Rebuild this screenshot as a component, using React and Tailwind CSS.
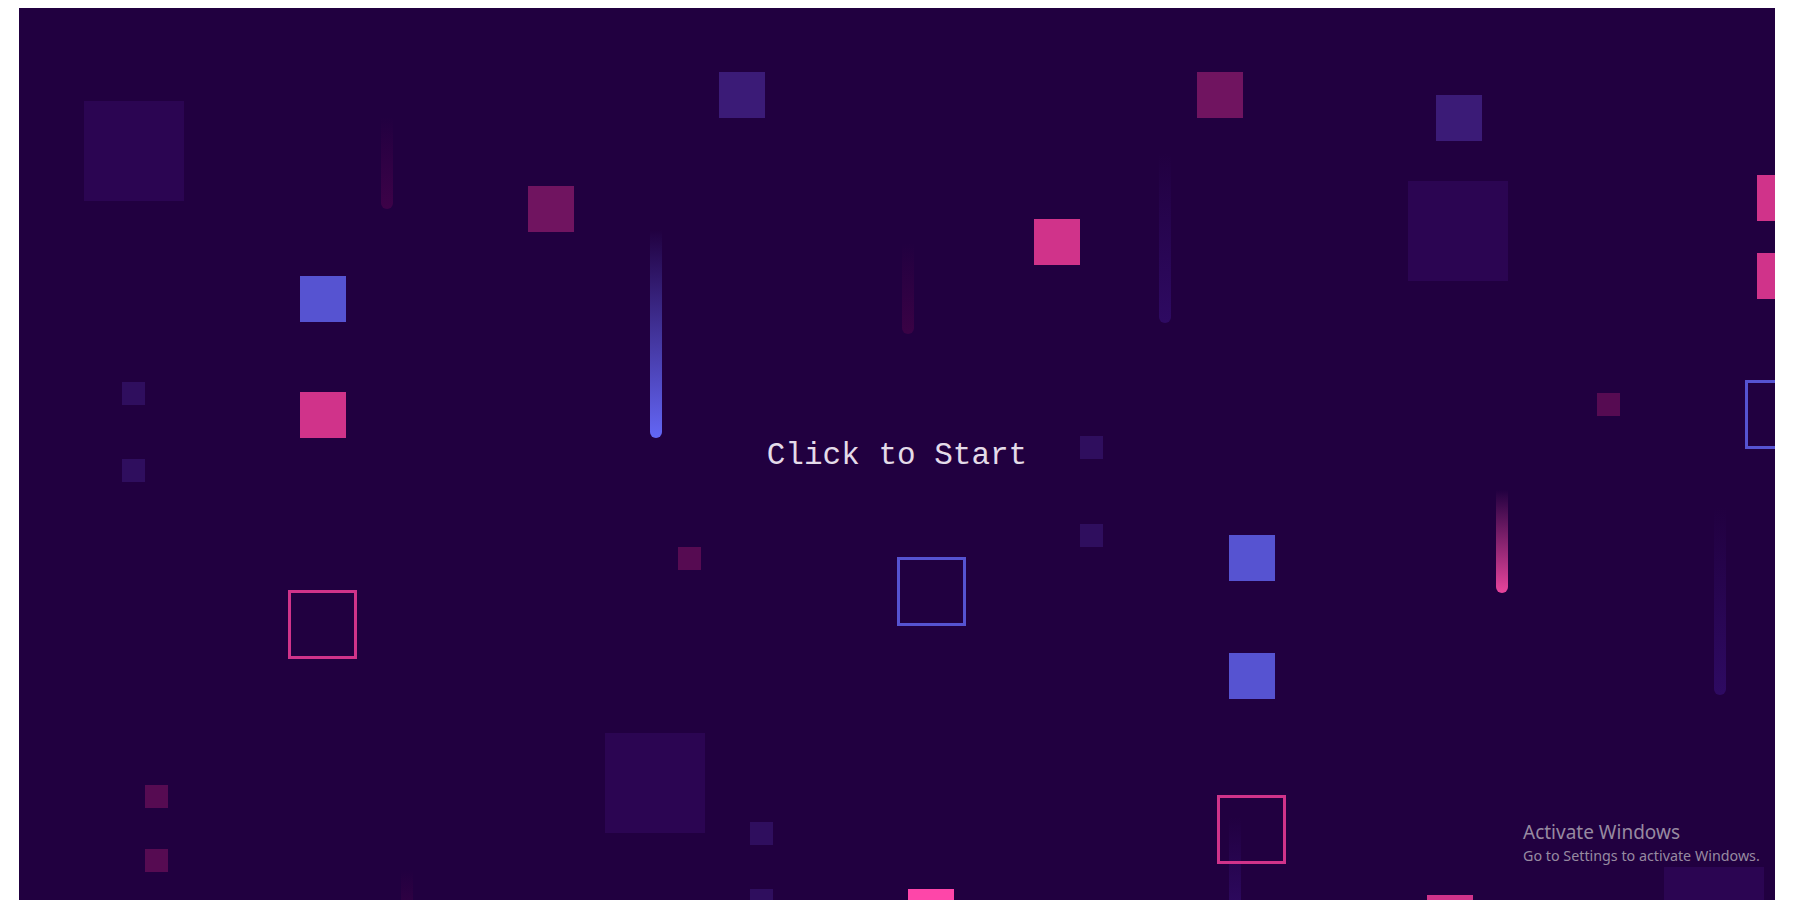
import React from "react";

const big = [
  [65, 93],
  [1389, 173],
  [586, 725],
  [1645, 859],
];
const med = [
  [700, 64, "bg-[#3b1b77]"],
  [1417, 87, "bg-[#3b1b77]"],
  [509, 178, "bg-[#701460]"],
  [1178, 64, "bg-[#701460]"],
  [281, 268, "bg-[#5653d1]"],
  [1210, 527, "bg-[#5653d1]"],
  [1210, 645, "bg-[#5653d1]"],
  [281, 384, "bg-[#d0338a]"],
  [1015, 211, "bg-[#d0338a]"],
  [1738, 167, "bg-[#d0338a]"],
  [1738, 245, "bg-[#d0338a]"],
  [1408, 887, "bg-[#d0338a]"],
  [889, 881, "bg-[#fe46a9]"],
];
const small = [
  [103, 374, "bg-[#2f0e5e]"],
  [103, 451, "bg-[#2f0e5e]"],
  [1061, 428, "bg-[#2f0e5e]"],
  [1061, 516, "bg-[#2f0e5e]"],
  [731, 814, "bg-[#2f0e5e]"],
  [731, 881, "bg-[#2f0e5e]"],
  [126, 777, "bg-[#560b52]"],
  [126, 841, "bg-[#560b52]"],
  [659, 539, "bg-[#560b52]"],
  [1578, 385, "bg-[#560b52]"],
];
const outline = [
  [269, 582, "border-[#d0338a]"],
  [1198, 787, "border-[#d0338a]"],
  [878, 549, "border-[#5653d1]"],
  [1726, 372, "border-[#5653d1]"],
];
const streaks = [
  [362, 109, 92, "#3d0248"],
  [631, 222, 208, "#6366f5"],
  [883, 235, 91, "#3a0245"],
  [1140, 145, 170, "#2e0a62"],
  [1477, 482, 103, "#e8449c"],
  [1695, 499, 188, "#2e0a62"],
  [1210, 809, 100, "#2e0a62"],
  [382, 862, 60, "#3a0245"],
];

export default function App() {
  return (
    <div className="w-[1800px] h-[909px] bg-white relative overflow-hidden">
      <div className="absolute left-[19px] top-[8px] w-[1756px] h-[892px] bg-[#210040] overflow-hidden flex items-center justify-center">
        {big.map(([x, y], i) => (
          <div
            key={"b" + i}
            className="absolute w-[100px] h-[100px] bg-[#2b0552]"
            style={{ left: x, top: y }}
          />
        ))}
        {streaks.map(([x, y, h, c], i) => (
          <div
            key={"s" + i}
            className="absolute w-[12px] rounded-b-full"
            style={{
              left: x,
              top: y,
              height: h,
              background: `linear-gradient(to bottom, rgba(33,0,64,0), ${c})`,
            }}
          />
        ))}
        {med.map(([x, y, c], i) => (
          <div
            key={"m" + i}
            className={"absolute w-[46px] h-[46px] " + c}
            style={{ left: x, top: y }}
          />
        ))}
        {small.map(([x, y, c], i) => (
          <div
            key={"sm" + i}
            className={"absolute w-[23px] h-[23px] " + c}
            style={{ left: x, top: y }}
          />
        ))}
        {outline.map(([x, y, c], i) => (
          <div
            key={"o" + i}
            className={"absolute w-[69px] h-[69px] border-[3px] " + c}
            style={{ left: x, top: y }}
          />
        ))}
        <div className="relative mt-[2px] text-[31px] leading-none text-[#e4dbe9] font-['Liberation_Mono','Courier_New',monospace]">
          Click to Start
        </div>
      </div>
      <div className="absolute left-[1523px] top-[823px] text-[#978aa0] font-['Noto_Sans','Open_Sans',sans-serif] leading-none">
        <div className="text-[19px]">Activate Windows</div>
        <div className="text-[14.3px] mt-[7px]">Go to Settings to activate Windows.</div>
      </div>
    </div>
  );
}
